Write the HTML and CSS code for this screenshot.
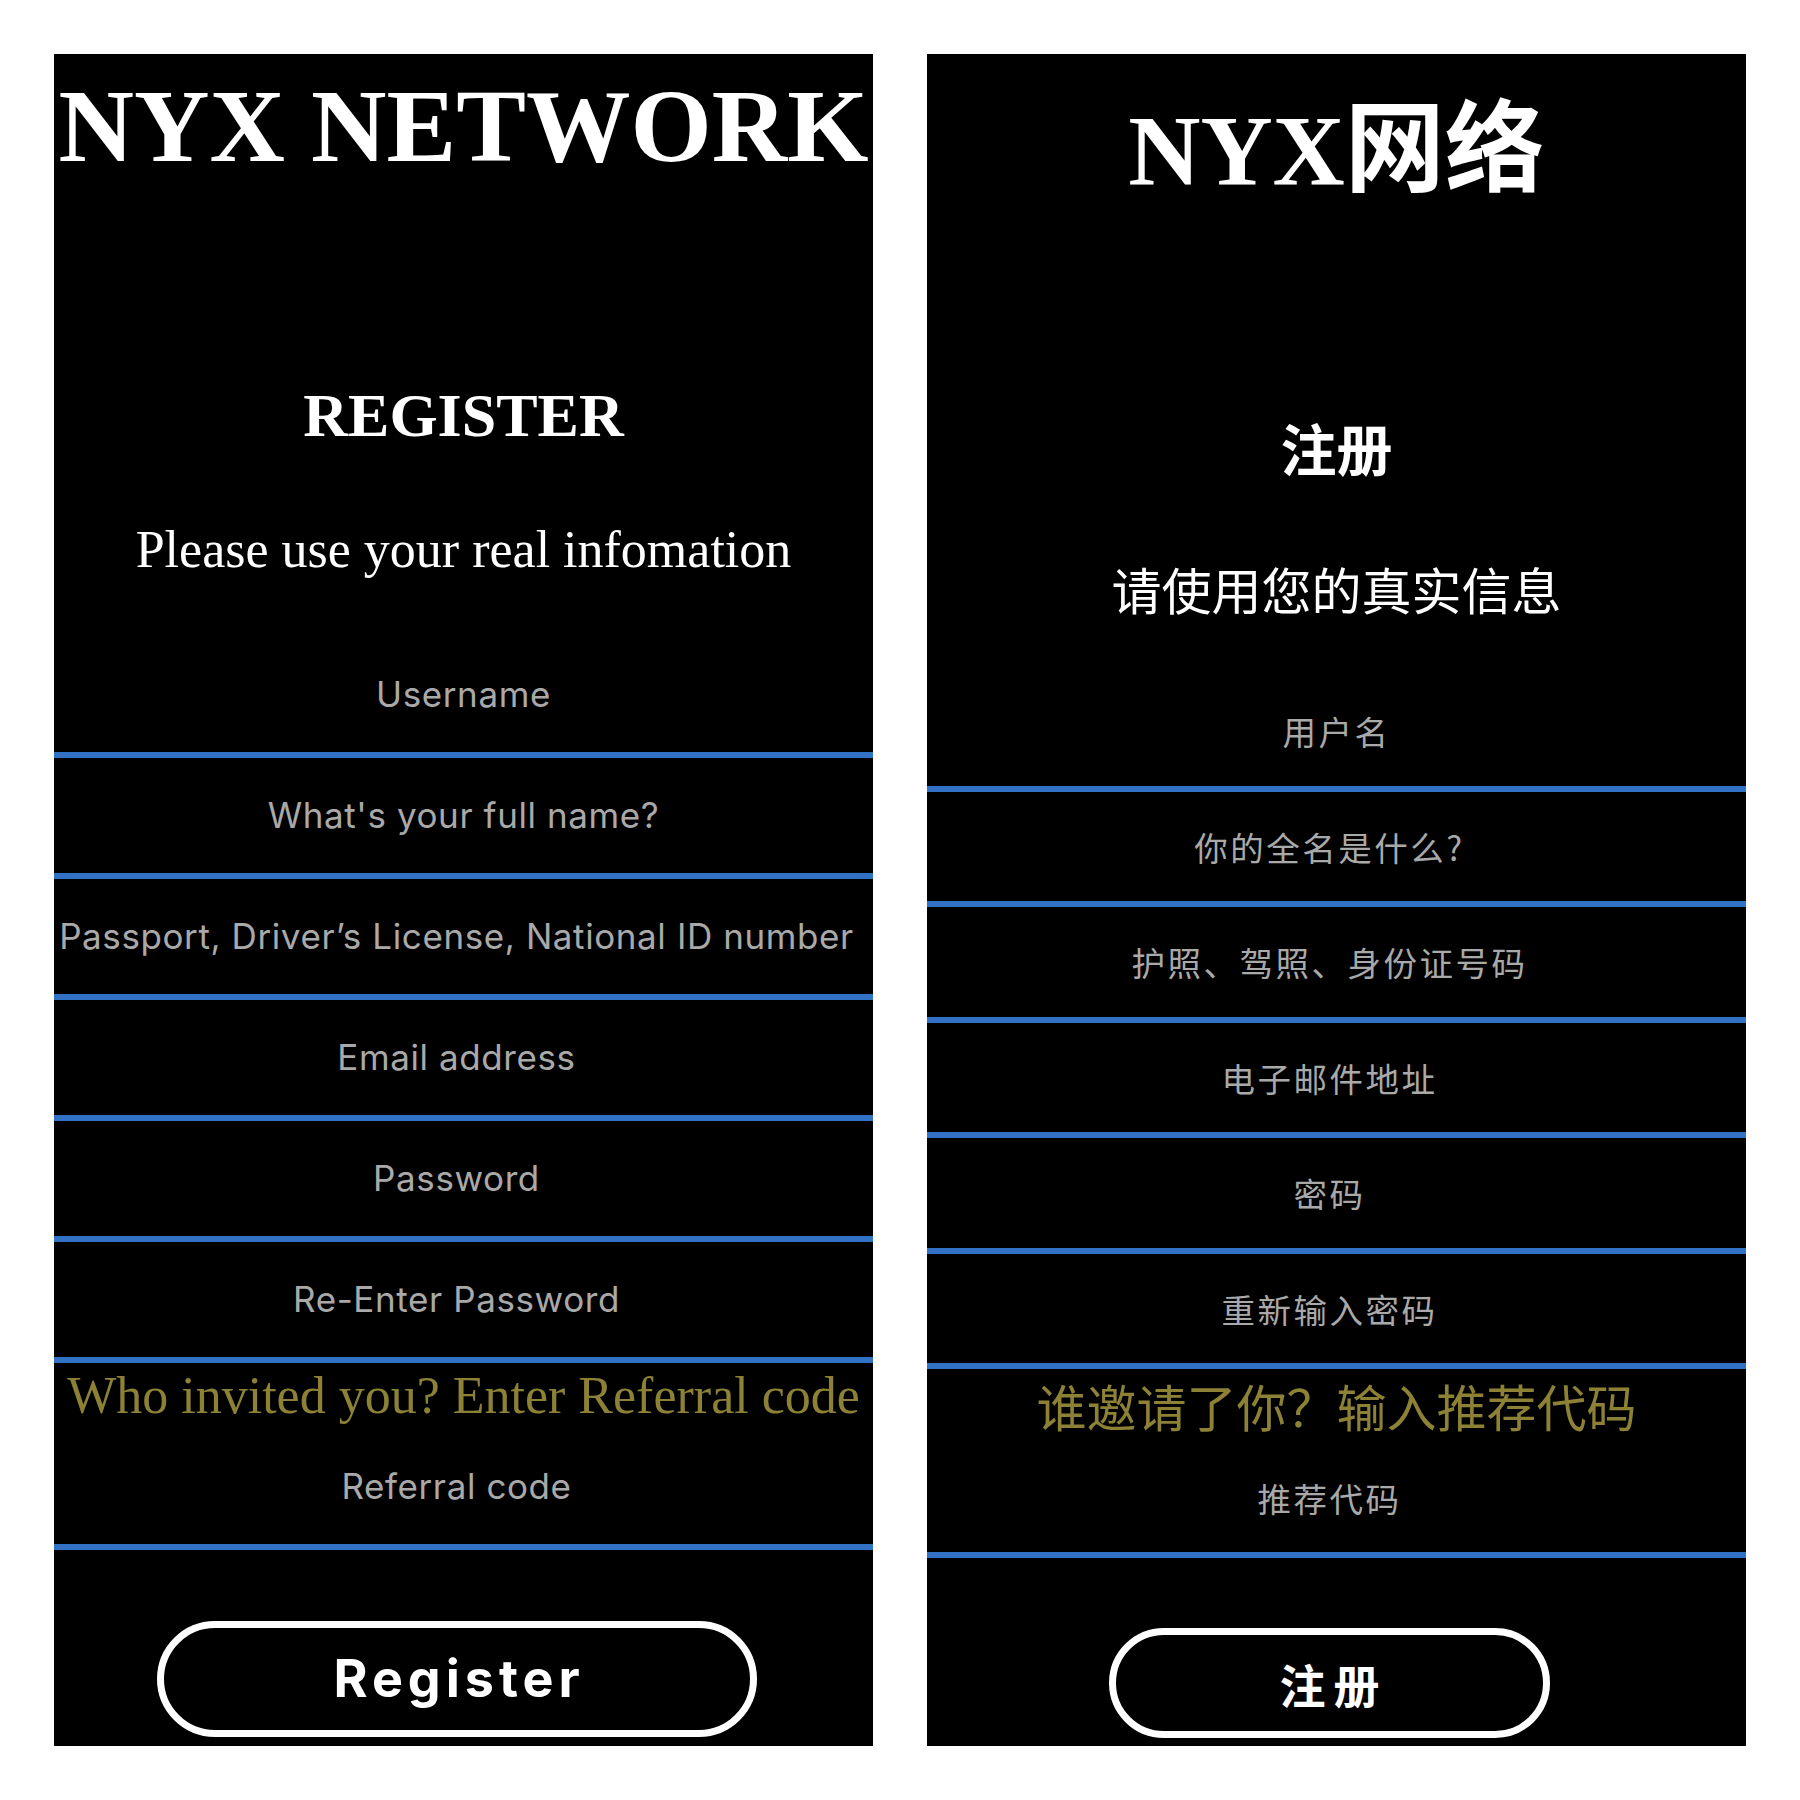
FILE: index.html
```html
<!DOCTYPE html>
<html lang="en">
<head>
<meta charset="utf-8">
<title>NYX Network - Register</title>
<link rel="stylesheet" href="styles.css">
</head>
<body>
<div class="page">
  <section class="panel en">
    <h1 class="title">NYX NETWORK</h1>
    <h2 class="heading">REGISTER</h2>
    <p class="lead">Please use your real infomation</p>
    <div class="fields">
      <input class="field" type="text" placeholder="Username">
      <input class="field" type="text" placeholder="What's your full name?">
      <input class="field offset" type="text" placeholder="Passport, Driver’s License, National ID number">
      <input class="field offset" type="email" placeholder="Email address">
      <input class="field offset" type="password" placeholder="Password">
      <input class="field offset" type="password" placeholder="Re-Enter Password">
    </div>
    <p class="invite">Who invited you? Enter Referral code</p>
    <input class="field offset" type="text" placeholder="Referral code">
    <button class="btn" type="button">Register</button>
  </section>
  <section class="panel zh" lang="zh-CN">
    <h1 class="title">NYX网络</h1>
    <h2 class="heading">注册</h2>
    <p class="lead">请使用您的真实信息</p>
    <div class="fields">
      <input class="field" type="text" placeholder="用户名">
      <input class="field offset" type="text" placeholder="你的全名是什么?">
      <input class="field offset" type="text" placeholder="护照、驾照、身份证号码">
      <input class="field offset" type="email" placeholder="电子邮件地址">
      <input class="field offset" type="password" placeholder="密码">
      <input class="field offset" type="password" placeholder="重新输入密码">
    </div>
    <p class="invite">谁邀请了你？输入推荐代码</p>
    <input class="field offset" type="text" placeholder="推荐代码">
    <button class="btn" type="button">注册</button>
  </section>
</div>
</body>
</html>
```
FILE: styles.css
```css
html, body {
  margin: 0;
  padding: 0;
  background: #ffffff;
}

.page {
  display: flex;
  gap: 54px;
  padding: 54px;
}

.panel {
  width: 819px;
  height: 1692px;
  background: #000000;
  display: flex;
  flex-direction: column;
  color: #ffffff;
  overflow: hidden;
}

.panel > * {
  flex-shrink: 0;
}

.title,
.heading,
.lead,
.invite {
  margin: 0;
  text-align: center;
  line-height: 1;
  white-space: nowrap;
}

.title {
  font-family: "Liberation Serif", "Noto Sans CJK SC", serif;
  font-weight: 700;
}

.fields {
  display: flex;
  flex-direction: column;
}

.field {
  display: block;
  box-sizing: border-box;
  width: 100%;
  margin: 0;
  padding: 0;
  background: transparent;
  border: none;
  border-bottom: 6px solid #3171c6;
  outline: none;
  text-align: center;
  color: #a9a9a9;
  flex-shrink: 0;
}

.field.offset {
  padding-right: 14px;
}

.field::placeholder {
  color: #a9a9a9;
  opacity: 1;
}

.invite {
  color: #8c8135;
}

.btn {
  align-self: center;
  margin-right: 14px;
  box-sizing: border-box;
  background: #000000;
  border: 7px solid #ffffff;
  border-radius: 60px;
  color: #ffffff;
  font-weight: 700;
  padding: 0;
  cursor: pointer;
}

/* English panel */
.en .title {
  margin-top: 20px;
  font-size: 104.5px;
}

.en .heading {
  margin-top: 205px;
  font-family: "Liberation Serif", serif;
  font-weight: 700;
  font-size: 62px;
}

.en .lead {
  margin-top: 78px;
  font-family: "Liberation Serif", serif;
  font-size: 52px;
}

.en .fields {
  margin-top: 61px;
}

.en .field {
  height: 121px;
  font-family: Inter, "Liberation Sans", sans-serif;
  font-size: 35px;
  letter-spacing: 0.6px;
}

.en .invite {
  height: 66px;
  line-height: 66px;
  font-family: "Liberation Serif", serif;
  font-size: 52px;
}

.en .btn {
  margin-top: 71px;
  width: 600px;
  height: 116px;
  font-family: Inter, "Liberation Sans", sans-serif;
  font-size: 52px;
  letter-spacing: 5px;
  padding-left: 5px;
}

/* Chinese panel */
.zh .title {
  margin-top: 47px;
  font-size: 100px;
}

.zh .heading {
  margin-top: 218px;
  font-family: "Noto Sans CJK SC", sans-serif;
  font-weight: 700;
  font-size: 56px;
}

.zh .lead {
  margin-top: 88px;
  font-family: "Noto Sans CJK SC", sans-serif;
  font-size: 50px;
}

.zh .fields {
  margin-top: 63px;
}

.zh .field {
  height: 115.5px;
  font-family: "Noto Sans CJK SC", sans-serif;
  font-size: 33.5px;
  letter-spacing: 2.5px;
}

.zh .invite {
  height: 73.5px;
  line-height: 73.5px;
  font-family: "Noto Sans CJK SC", sans-serif;
  font-size: 50px;
}

.zh .btn {
  margin-top: 70px;
  width: 441px;
  height: 110px;
  font-family: "Noto Sans CJK SC", sans-serif;
  font-size: 46px;
  letter-spacing: 8px;
  padding-left: 8px;
}
```
